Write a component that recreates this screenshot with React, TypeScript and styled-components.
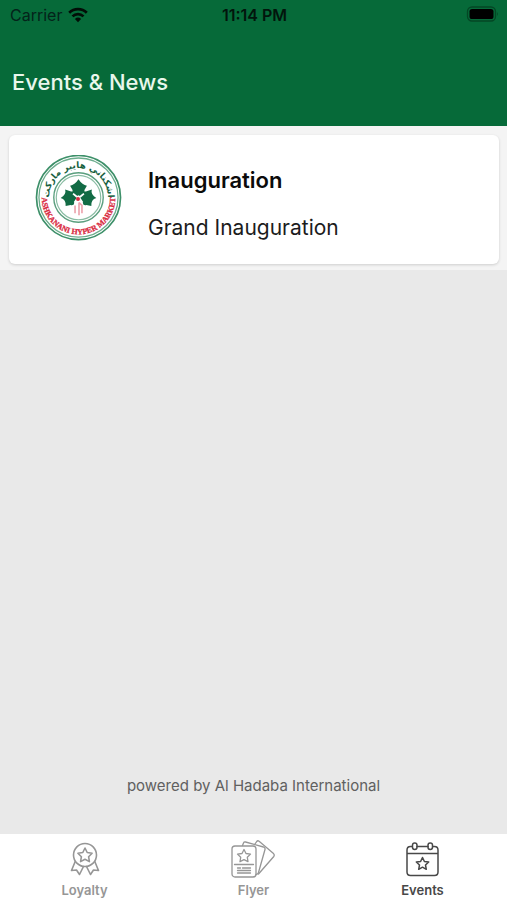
import React, { useState } from "react";
import styled, { createGlobalStyle } from "styled-components";

const GlobalStyle = createGlobalStyle`
  * { box-sizing: border-box; }
  body {
    margin: 0;
    font-family: Inter, "Liberation Sans", sans-serif;
    background: #e9e9e9;
  }
`;

const Screen = styled.div`
  min-height: 100vh;
  display: flex;
  flex-direction: column;
  background: #e9e9e9;
`;

const Header = styled.header`
  background: #066a39;
  padding-bottom: 30px;
`;

const StatusBar = styled.div`
  display: grid;
  grid-template-columns: 1fr auto 1fr;
  align-items: center;
  height: 30px;
  padding: 0 8px 0 10px;
  font-size: 16px;
  line-height: 20px;
  color: #04231a;
`;

const Carrier = styled.div`
  display: flex;
  align-items: center;
  gap: 6px;
`;

const Clock = styled.time`
  font-weight: 600;
  color: #02150c;
`;

const BatteryIcon = styled.svg`
  justify-self: end;
`;

const Title = styled.h1`
  margin: 38px 12px 0;
  font-size: 22px;
  line-height: 28px;
  font-weight: 500;
  color: #e9f7ec;
`;

const EventList = styled.ul`
  list-style: none;
  margin: 0;
  padding: 9px 8px 6px 9px;
  background: #f4f4f4;
`;

const EventCard = styled.li`
  display: flex;
  align-items: center;
  gap: 26px;
  min-height: 129px;
  padding: 0 26px;
  border-radius: 6px;
  background: #ffffff;
  box-shadow: 0 1px 3px rgba(0, 0, 0, 0.16);
`;

const EventText = styled.div`
  display: flex;
  flex-direction: column;
  gap: 20px;
  padding-top: 8px;
`;

const EventName = styled.h2`
  margin: 0;
  font-size: 22px;
  line-height: 28px;
  font-weight: 600;
  color: #0b0b0b;
`;

const EventDetail = styled.p`
  margin: 0;
  font-size: 21px;
  line-height: 28px;
  color: #1c1c1c;
`;

const Main = styled.main`
  flex: 1;
  display: flex;
  flex-direction: column;
`;

const Credit = styled.footer`
  margin-top: auto;
  padding-bottom: 38px;
  text-align: center;
  font-size: 15px;
  line-height: 20px;
  color: #606060;
`;

const TabBar = styled.nav`
  display: grid;
  grid-template-columns: repeat(3, 1fr);
  height: 66px;
  background: #ffffff;
`;

const Tab = styled.button<{ $active: boolean }>`
  display: flex;
  flex-direction: column;
  align-items: center;
  padding: 5px 0 0;
  border: 0;
  background: none;
  font: inherit;
  font-size: 13px;
  line-height: 18px;
  font-weight: 600;
  color: ${(p) => (p.$active ? "#484848" : "#969696")};
  cursor: pointer;
`;

const TabIcon = styled.svg<{ $stroke: number }>`
  width: 48px;
  height: 42px;
  fill: none;
  stroke: currentColor;
  stroke-width: ${(p) => p.$stroke};
  stroke-linejoin: round;
  stroke-linecap: round;
`;

const Wifi = () => (
  <svg width="20" height="16" viewBox="0 0 20 16" fill="none" stroke="#020d07" strokeWidth="2.7" aria-label="Wi-Fi">
    <path d="M1.2 5.7a12.6 12.6 0 0 1 17.6 0" />
    <path d="M4.5 9.4a7.9 7.9 0 0 1 11 0" />
    <path d="M10 15.2 6.9 12a4.5 4.5 0 0 1 6.2 0z" fill="#020d07" stroke="none" />
  </svg>
);

const Battery = () => (
  <BatteryIcon width="33" height="18" viewBox="0 0 33 18" aria-label="Battery full">
    <rect x="1.5" y="1" width="28" height="14" rx="4.5" fill="none" stroke="#044725" strokeWidth="1.3" />
    <rect x="3.5" y="3" width="24" height="10" rx="2.6" fill="#000" />
    <path d="M31 6q1.8 2 0 4z" fill="#044725" />
  </BatteryIcon>
);

const Logo = () => (
  <svg width="87" height="90" viewBox="0 1 88 91" role="img" aria-label="Ashkanani Hyper Market">
    <defs>
      <path id="arc-top" d="M15.3 52A29.8 29.8 0 1 1 72.7 52" />
      <path id="arc-bottom" d="M7.3 38A37.2 37.2 0 1 0 80.7 38" />
    </defs>
    <circle cx="44" cy="44" r="42.5" fill="#fff" stroke="#3d9069" strokeWidth="1.7" />
    <circle cx="44" cy="44" r="40" fill="none" stroke="#6cad8d" strokeWidth="1.3" />
    <circle cx="44" cy="44" r="25" fill="none" stroke="#5b9f7e" strokeWidth="1.4" />
    <circle cx="44" cy="44" r="22.5" fill="none" stroke="#8bbda4" strokeWidth="1.2" />
    <text fontFamily='"DejaVu Sans", sans-serif' fontSize="9" fontWeight="700" fill="#175f40" textAnchor="middle">
      <textPath href="#arc-top" startOffset="50%">اشكناني هايبر ماركت</textPath>
    </text>
    <text fontFamily='"Liberation Serif", serif' fontSize="8" fontWeight="700" fill="#d92b42" stroke="#d92b42" strokeWidth="0.3" textAnchor="middle">
      <textPath href="#arc-bottom" startOffset="50%">ASHKANANI HYPER MARKET</textPath>
    </text>
    <g fill="#126b45">
      <path d="M44 43C40 41 38 39 38 36.500L35.500 32Q40 31.500 44 25.500Q48 31.500 52.500 32L50 36.500C50 39 48 41 44 43Z" />
      <path d="M43 45C42 40 39 37.500 36.500 38L30.500 36Q32 41 26 44.500Q31.500 46 31 52.500L36 51.500Q40 53 43 45Z" />
      <path d="M45 45C46 40 49 37.500 51.500 38L57.500 36Q56 41 62 44.500Q56.500 46 57 52.500L52 51.500Q48 53 45 45Z" />
      <path d="M38 37h12v7H38z" />
    </g>
    <path d="M38.500 40l3.500 3h4l3.500-3M40 49l4-6 4 6" fill="none" stroke="#fff" strokeWidth="1.8" />
    <path d="M39.500 49q4.500-4 9 0l1 10-5 4-5-3z" fill="#fff" />
    <path d="M40.500 60V52M44.500 62V49M47.500 60V52l-3-3" fill="none" stroke="#eba0aa" strokeWidth="1.6" />
    <circle cx="43.500" cy="45.500" r="2" fill="#d92b42" />
  </svg>
);

const LoyaltyIcon = () => (
  <TabIcon $stroke={1.6} viewBox="0 0 48 42" aria-hidden="true">
    <circle cx="24" cy="16" r="11.5" />
    <path d="m24 9 2.2 4.5 4.9.7-3.5 3.5.8 4.9-4.4-2.3-4.4 2.3.8-4.9-3.5-3.5 4.9-.7z" />
    <path d="m14.2 22.5-3.7 9 5-.5 3 4.5 4-8M33.8 22.5l3.7 9-5-.5-3 4.5-4-8" />
  </TabIcon>
);

const FlyerIcon = () => (
  <TabIcon $stroke={1.3} viewBox="0 0 48 42" aria-hidden="true">
    <rect x="2" y="7" width="24" height="31" rx="3" />
    <path d="M12.5 6.5 13.5 4q.5-1.3 2-1l18 5q2 .7 1.500 2.500l-6.500 23q-.8 2-2.500 2" />
    <path d="m25 5 1.7-2.5q1-1.3 2.4-.3L43.500 14.500q1.500 1.500.3 3L28.500 35" />
    <path d="m14 10.5 2 4 4.500.6-3.200 3.200.7 4.400-4-2-4 2 .7-4.400L7.500 15.100l4.500-.6zM4.500 25.500h19" />
    <path d="M7.5 29h3M12.5 29h8M7.5 31.5h13M7.5 34h13" />
  </TabIcon>
);

const EventsIcon = () => (
  <TabIcon $stroke={1.5} viewBox="0 0 48 42" aria-hidden="true">
    <path d="M13 7.5h-1.500Q8 7.5 8 11V33q0 3.500 3.500 3.500h24q3.500 0 3.500-3.500V11Q39 7.500 35.500 7.500H34M18 7.500h11M8 14.500h31" />
    <rect x="13.5" y="4" width="4.5" height="6.5" rx="2.2" />
    <rect x="29" y="4" width="4.5" height="6.5" rx="2.2" />
    <path d="m23.5 18.5 1.900 4 4.300.5-3.200 3 .8 4.300-3.800-2.100-3.800 2.100.8-4.300-3.200-3 4.300-.5z" />
  </TabIcon>
);

const tabs = [
  { name: "Loyalty", Icon: LoyaltyIcon },
  { name: "Flyer", Icon: FlyerIcon },
  { name: "Events", Icon: EventsIcon },
];

export default function App() {
  const [active, setActive] = useState("Events");
  return (
    <>
      <GlobalStyle />
      <Screen>
        <Header>
          <StatusBar>
            <Carrier>
              Carrier
              <Wifi />
            </Carrier>
            <Clock>11:14 PM</Clock>
            <Battery />
          </StatusBar>
          <Title>Events &amp; News</Title>
        </Header>
        <Main>
          <EventList>
            <EventCard>
              <Logo />
              <EventText>
                <EventName>Inauguration</EventName>
                <EventDetail>Grand Inauguration</EventDetail>
              </EventText>
            </EventCard>
          </EventList>
          <Credit>powered by Al Hadaba International</Credit>
        </Main>
        <TabBar>
          {tabs.map(({ name, Icon }) => (
            <Tab
              key={name}
              type="button"
              $active={name === active}
              aria-current={name === active ? "page" : undefined}
              onClick={() => setActive(name)}
            >
              <Icon />
              {name}
            </Tab>
          ))}
        </TabBar>
      </Screen>
    </>
  );
}
